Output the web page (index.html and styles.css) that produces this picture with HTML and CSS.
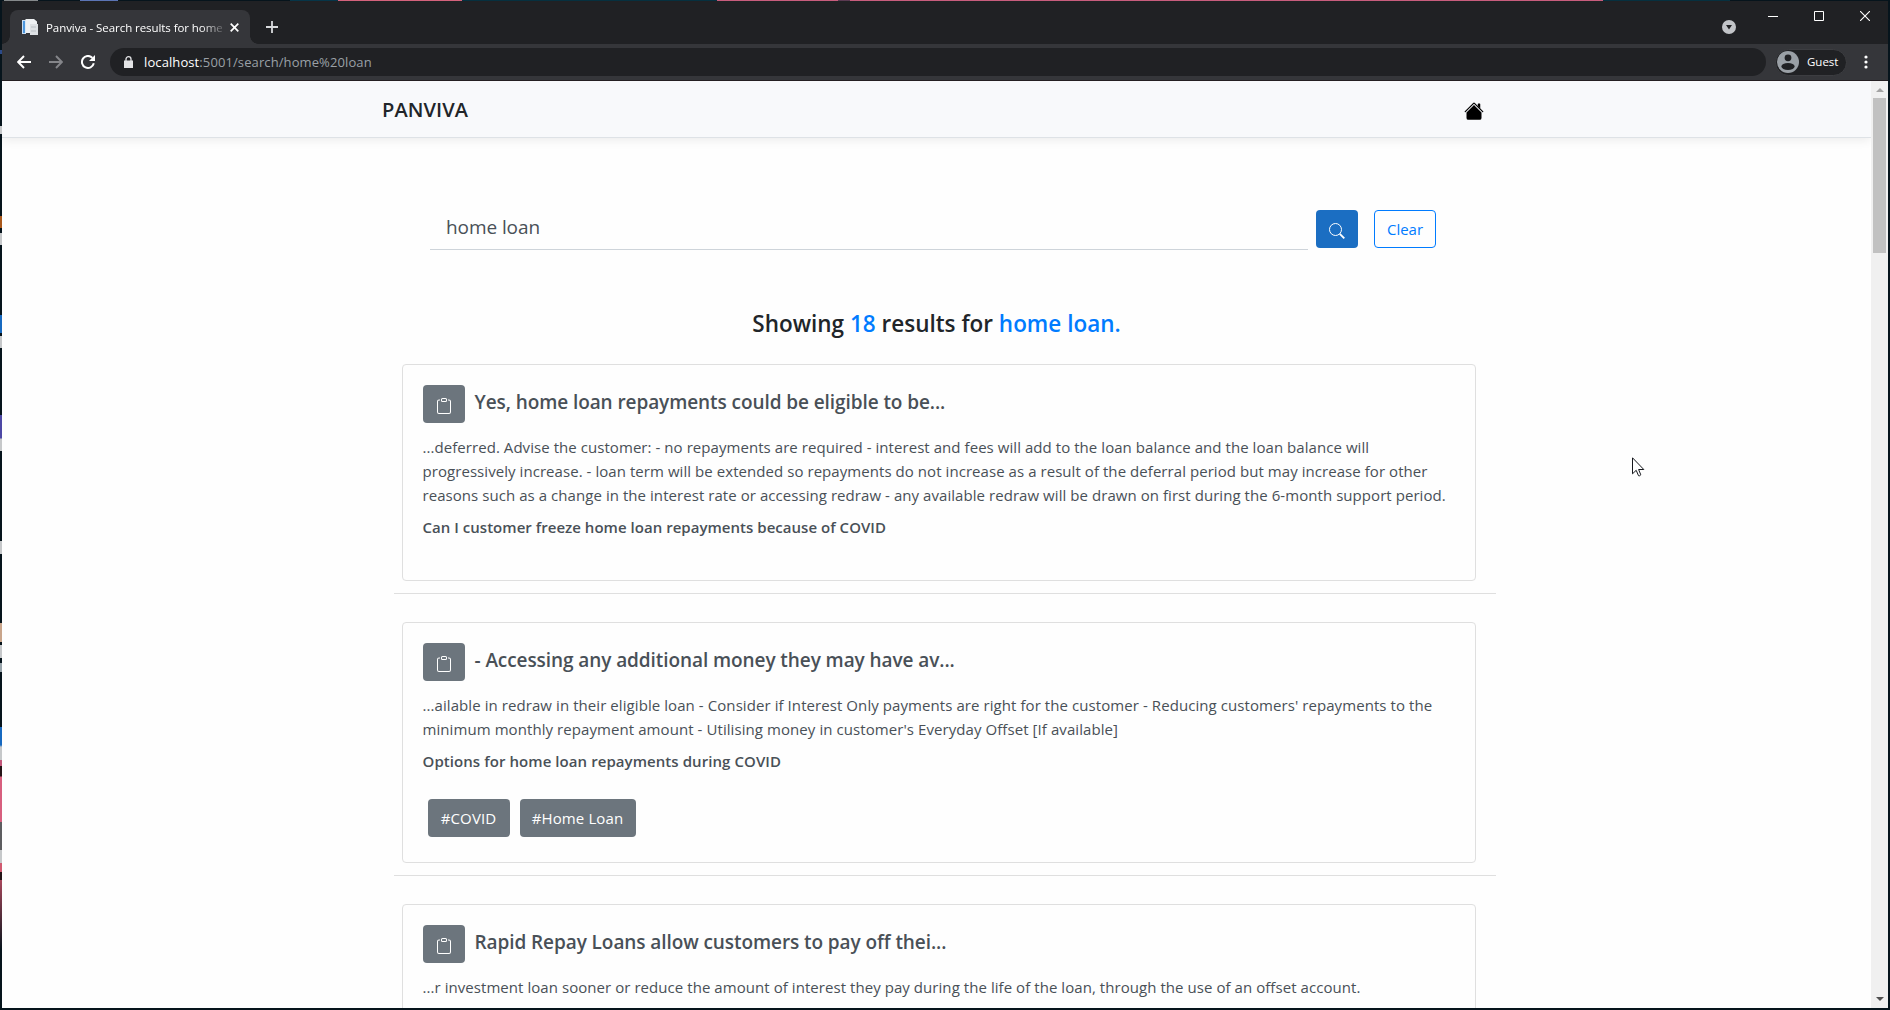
FILE: index.html
```html
<!DOCTYPE html>
<html lang="en">
<head>
<meta charset="utf-8">
<title>Panviva - Search results for home loan</title>
<link rel="stylesheet" href="styles.css">
</head>
<body>
<div class="window">
  <div class="titlebar">
    <div class="tab">
      <svg class="favicon" width="16" height="16" viewBox="0 0 16 16"><path d="M0 1h4v14H0z" fill="#c9def3"/><path d="M1 2h2v12H1z" fill="#4d97dd"/><path d="M3.500 0H12l3 2.500V14H3.500z" fill="#eef1f3"/><path d="M8 5h8v11H8z" fill="#dde1e4"/><path d="M9 8h5M9 12h5" stroke="#b9bfc4"/></svg>
      <span class="tab-title">Panviva - Search results for home</span>
      <svg class="tab-close" width="9" height="9" viewBox="0 0 9 9"><path d="M.7.700l7.600 7.600M8.300.700L.7 8.300" stroke="#fff" stroke-width="1.700"/></svg>
    </div>
    <svg class="new-tab" width="12" height="12" viewBox="0 0 12 12"><path d="M6 0v12M0 6h12" stroke="#d8dadd" stroke-width="1.800"/></svg>
    <svg class="tab-search" width="14" height="14" viewBox="0 0 14 14"><circle cx="7" cy="7" r="7" fill="#c2c4c8"/><path d="M4 5h6L7 9.500z" fill="#202124"/></svg>
    <div class="controls">
      <svg width="10" height="10" viewBox="0 0 10 10"><path d="M0 5.500h10" stroke="#fff"/></svg>
      <svg width="10" height="10" viewBox="0 0 10 10"><path d="M.5.500h9v9h-9z" fill="none" stroke="#fff"/></svg>
      <svg width="10" height="10" viewBox="0 0 10 10"><path d="M0 0l10 10M10 0L0 10" stroke="#fff" stroke-width="1.100"/></svg>
    </div>
  </div>
  <div class="toolbar">
    <svg class="back" width="14" height="14" viewBox="0 0 14 14"><path d="M14 7H1.500M7 1L1.200 7 7 13" fill="none" stroke="#fff" stroke-width="1.900"/></svg>
    <svg class="forward" width="14" height="14" viewBox="0 0 14 14"><path d="M0 7h12.500M7 1l5.800 6L7 13" fill="none" stroke="#85868a" stroke-width="1.900"/></svg>
    <svg class="reload" width="14" height="14" viewBox="0 0 14 14"><path d="M12.800 8.300A6 6 0 1 1 11.400 2.900" fill="none" stroke="#fff" stroke-width="2"/><path d="M14 0v6H8z" fill="#fff"/></svg>
    <div class="address">
      <svg width="9" height="12" viewBox="0 0 9 12"><path d="M0 4.500h9V12H0z" fill="#e3e4e6"/><path d="M2 5V3a2.500 2.300 0 0 1 5 0v2" fill="none" stroke="#e3e4e6" stroke-width="1.300"/></svg>
      <span class="url"><b>localhost</b>:5001/search/home%20loan</span>
    </div>
    <div class="profile">
      <svg width="22" height="22" viewBox="0 0 22 22"><circle cx="11" cy="11" r="11" fill="#9aa0a6"/><circle cx="11" cy="6.800" r="3.400" fill="#202124"/><ellipse cx="11" cy="15.500" rx="6.600" ry="3.400" fill="#202124"/></svg>
      <span>Guest</span>
    </div>
    <svg class="kebab" width="4" height="14" viewBox="0 0 4 14"><g fill="#fff"><circle cx="2" cy="2" r="1.600"/><circle cx="2" cy="7" r="1.600"/><circle cx="2" cy="12" r="1.600"/></g></svg>
  </div>
  <div class="viewport">
    <div class="page">
      <nav class="navbar">
        <span class="brand">PANVIVA</span>
        <svg class="home" width="20" height="20" viewBox="0 0 16 16"><path d="M8 3.293l6 6V13.500a1.500 1.500 0 0 1-1.500 1.500h-9A1.500 1.500 0 0 1 2 13.500V9.293l6-6zm5-.793V6l-2-2V2.500a.5.500 0 0 1 .5-.5h1a.5.500 0 0 1 .5.500z"/><path d="M7.293 1.500a1 1 0 0 1 1.414 0l6.647 6.646a.5.500 0 0 1-.708.708L8 2.207 1.354 8.854a.5.500 0 1 1-.708-.708L7.293 1.500z"/></svg>
      </nav>
      <form class="search">
        <div class="query">home loan</div>
        <div class="btn go"><svg width="16" height="16" viewBox="0 0 16 16"><circle cx="6.500" cy="6.500" r="6" fill="none" stroke="#fff"/><path d="M10.800 10.800L15.300 15.300" stroke="#fff" stroke-width="1.900"/></svg></div>
        <div class="btn clear">Clear</div>
      </form>
      <h3 class="summary">Showing <em>18</em> results for <em class="term">home loan.</em></h3>
      <div class="results">
        <article class="card">
          <div class="head"><div class="btn clip"><svg width="16" height="16" viewBox="0 0 16 16"><use href="#clip"/></svg></div><h5>Yes, home loan repayments could be eligible to be...</h5></div>
          <p>...deferred. Advise the customer: - no repayments are required - interest and fees will add to the loan balance and the loan balance will<br>progressively increase. - loan term will be extended so repayments do not increase as a result of the deferral period but may increase for other<br>reasons such as a change in the interest rate or accessing redraw - any available redraw will be drawn on first during the 6-month support period.</p>
          <h6>Can I customer freeze home loan repayments because of COVID</h6>
          <div class="tags none"></div>
        </article>
        <hr>
        <article class="card wide">
          <div class="head"><div class="btn clip"><svg width="16" height="16" viewBox="0 0 16 16"><use href="#clip"/></svg></div><h5>- Accessing any additional money they may have av...</h5></div>
          <p>...ailable in redraw in their eligible loan - Consider if Interest Only payments are right for the customer - Reducing customers' repayments to the<br>minimum monthly repayment amount - Utilising money in customer's Everyday Offset [If available]</p>
          <h6>Options for home loan repayments during COVID</h6>
          <div class="tags"><div class="btn tag covid">#COVID</div><div class="btn tag">#Home Loan</div></div>
        </article>
        <hr>
        <article class="card">
          <div class="head"><div class="btn clip"><svg width="16" height="16" viewBox="0 0 16 16"><use href="#clip"/></svg></div><h5>Rapid Repay Loans allow customers to pay off thei...</h5></div>
          <p>...r investment loan sooner or reduce the amount of interest they pay during the life of the loan, through the use of an offset account.</p>
          <div class="tags none"></div>
        </article>
      </div>
    </div>
    <div class="scrollbar"><i class="up"></i><i class="thumb"></i><i class="down"></i></div>
  </div>
</div>
<svg class="cursor" width="13" height="20" viewBox="0 0 13 20"><path d="M.5.800v16l3.700-3.500 2.300 5.400q1.300.6 2.300-.9L6.600 12.500h5.200z" fill="#fff" stroke="#15171c" stroke-width="1"/></svg>
<svg width="0" height="0" class="defs"><defs><g id="clip" fill="#fff"><path d="M4 1.500H3a2 2 0 0 0-2 2V14a2 2 0 0 0 2 2h10a2 2 0 0 0 2-2V3.500a2 2 0 0 0-2-2h-1v1h1a1 1 0 0 1 1 1V14a1 1 0 0 1-1 1H3a1 1 0 0 1-1-1V3.500a1 1 0 0 1 1-1h1v-1z"/><path d="M9.500 1a.5.500 0 0 1 .5.500v1a.5.500 0 0 1-.5.500h-3a.5.500 0 0 1-.5-.5v-1a.5.500 0 0 1 .5-.5h3zm-3-1A1.500 1.500 0 0 0 5 1.500v1A1.500 1.500 0 0 0 6.500 4h3A1.500 1.500 0 0 0 11 2.500v-1A1.500 1.500 0 0 0 9.500 0h-3z"/></g></defs></svg>
</body>
</html>
```
FILE: styles.css
```css
* { box-sizing: border-box; }
body {
  margin: 0; height: 1010px; overflow: hidden; padding: 1px 2px 2px;
  font-family: "Open Sans", "Noto Sans", sans-serif; font-size: 15px; color: #212529;
  background-color: #06141c;
  /* desktop wallpaper and icons showing past the window's top and left edges */
  background-image:
    linear-gradient(90deg, #06141c 4px, #85898b 4px 38px, #06141c 38px 80px, #5b74b5 80px 118px, #06141c 118px 290px, #063548 290px 338px, #d4627c 338px 462px, #06303f 462px 717px, #c85d7d 717px 838px, #5b3a52 838px 850px, #c85d7d 850px 1603px, #06303f 1603px 1730px, #06141c 1730px),
    linear-gradient(#06141c 50px, #2b4a8a 50px 54px, #06141c 54px 126px, #c6c8ca 126px 134px, #06141c 134px 216px, #a9581c 216px 228px, #06141c 228px 233px, #c6c8ca 233px 245px, #06141c 245px 315px, #1769c0 315px 333px, #06141c 333px 336px, #c6c8ca 336px 348px, #06141c 348px 415px, #4d48a5 415px 438px, #c6c8ca 439px 451px, #06141c 451px 541px, #c6c8ca 541px 554px, #06141c 554px 623px, #c9a58b 623px 642px, #06141c 642px 645px, #c6c8ca 645px 658px, #06141c 658px 663px, #98a4ab 663px 672px, #06141c 672px 727px, #1769c0 727px 745px, #c6c8ca 747px 760px, #c2577a 760px 766px, #251417 766px 776px, #d75f7e 777px 822px, #5d5d60 822px 850px, #c6c8ca 850px 863px, #d05a70 863px 872px, #251417 872px 880px, #a8485c 880px, #06141c 950px);
  background-size: 1890px 1px, 2px 1010px;
  background-repeat: no-repeat;
}
svg { display: block; flex: none; }
.defs { position: absolute; }
.cursor { position: absolute; left: 1632px; top: 457px; }
.window { height: 1007px; display: flex; flex-direction: column; background: #fff; }

.titlebar { height: 43px; background: #202124; display: flex; align-items: center; padding-left: 8px; }
.tab { position: relative; width: 240px; height: 34px; margin-top: 9px; padding: 0 11px 0 12px; background: #35363a; border-radius: 8px 8px 0 0; display: flex; align-items: center; color: #fff; font-size: 11.500px; letter-spacing: -.07px; }
.tab::before, .tab::after { content: ""; position: absolute; bottom: 0; width: 8px; height: 8px; }
.tab::before { left: -8px; background: radial-gradient(circle at 0 0, transparent 7.500px, #35363a 8px); }
.tab::after { right: -8px; background: radial-gradient(circle at 100% 0, transparent 7.500px, #35363a 8px); }
.tab-title { width: 176px; margin-left: 8px; overflow: hidden; white-space: nowrap; -webkit-mask-image: linear-gradient(90deg, #000 155px, transparent 182px); }
.tab-close { margin-left: auto; }
.new-tab { margin: 9px 0 0 16px; }
.tab-search { margin: 9px 32px 0 auto; }
.controls { display: flex; gap: 36px; margin: -13px 18px 0 0; }

.toolbar { height: 37px; background: #35363a; border-bottom: 1px solid #241f22; display: flex; align-items: center; padding-left: 15px; }
.forward, .reload { margin-left: 18px; }
.address { width: 1656px; height: 28px; margin-left: 15px; border-radius: 14px; background: #202124; display: flex; align-items: center; padding-left: 14px; font-size: 13px; letter-spacing: .1px; color: #9aa0a6; }
.url { margin-left: 11px; }
.url b { font-weight: 400; color: #fff; }
.profile { width: 72px; height: 27px; margin-left: 9px; border-radius: 14px; background: #202124; border: 1px solid #3c3d41; display: flex; align-items: center; padding-left: 1px; color: #fff; font-size: 11.500px; }
.profile span { margin: -1px 0 0 8px; }
.kebab { margin-left: 17px; }

.viewport { flex: 1; min-height: 0; display: flex; }
.page { width: 1869px; overflow: hidden; background: #fefefe; display: flex; flex-direction: column; align-items: center; white-space: nowrap; }
.navbar { width: 1869px; height: 57px; flex: none; padding: 2px 387px 0 380px; background: #f8f9fb; border-bottom: 1px solid #dee2e6; box-shadow: 0 2px 10px rgba(0,0,0,.08); display: flex; align-items: center; justify-content: space-between; }
.brand { margin-top: -2px; font-size: 20px; font-weight: 600; letter-spacing: .1px; }
.home { margin-top: 2px; }
.search { flex: none; display: flex; align-items: flex-start; width: 1006px; margin: 72px 7px 0 0; }
.query { width: 878px; height: 40px; border-bottom: 1px solid #ced4da; padding: 4px 16px; font-size: 19px; line-height: 26px; letter-spacing: -.08px; color: #495057; }
.btn { height: 38px; border-radius: 4px; display: flex; align-items: center; justify-content: center; }
.go { width: 42px; margin-left: 8px; padding-top: 4px; background: #1b6ec2; }
.clear { width: 62px; margin-left: 16px; border: 1px solid #007bff; color: #007bff; }
.summary { flex: none; margin: 57px 0 0; font-size: 22.500px; line-height: 34px; font-weight: 600; }
em { font-style: normal; color: #007bff; }

.results { flex: none; width: 1102px; margin: 23px 0 0 16px; }
.card { width: 1074px; margin-left: 8px; border: 1px solid #dfdfdf; border-radius: 4px; padding: 20px; color: #495057; letter-spacing: .058px; }
.wide { letter-spacing: .075px; }
.head { display: flex; }
.clip { width: 42px; padding-top: 4px; background: #6c757d; }
h5 { margin: 0 0 0 10px; font-size: 19px; line-height: 34px; font-weight: 600; letter-spacing: -.08px; }
p { margin: 12px 0 8px; line-height: 24px; }
h6 { margin: 0; font-size: 15px; line-height: 24px; font-weight: 600; letter-spacing: .03px; }
.wide h6 { letter-spacing: .07px; }
.tags { display: flex; gap: 10px; padding: 26px 5px 5px; }
.none { height: 21px; padding: 0; }
.tag { width: 116px; background: #6c757d; color: #fff; letter-spacing: .12px; }
.covid { width: 82px; }
hr { margin: 12px 0 28px; border: 0; border-top: 1px solid #dfdfdf; }

.scrollbar { width: 17px; background: #f0f0f0; display: flex; flex-direction: column; align-items: center; }
.up { margin-top: 7px; border: 4px solid transparent; border-top: 0; border-bottom-color: #a3a3a3; }
.thumb { width: 13px; height: 155px; margin-top: 6px; background: #c1c1c1; }
.down { margin: auto 0 7px; border: 4px solid transparent; border-bottom: 0; border-top-color: #505050; }
```
